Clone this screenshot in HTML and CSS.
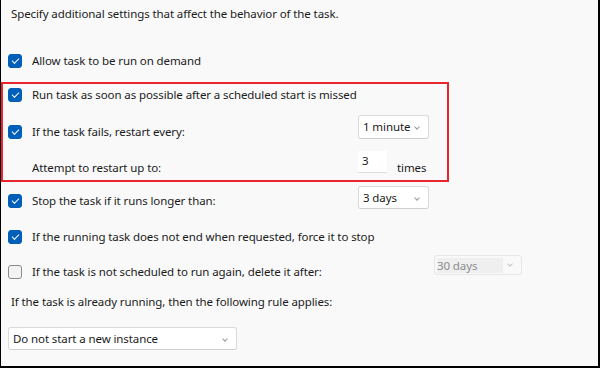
FILE: index.html
```html
<!DOCTYPE html>
<html lang="en">

<head>
    <meta charset="UTF-8">
    <meta name="viewport" content="width=device-width, initial-scale=1.0">
    <title>Task Settings</title>
    <link rel="stylesheet" href="styles.css">
</head>

<body>

    <div class="settings-panel">
        <p class="intro">Specify additional settings that affect the behavior of the task.</p>

        <!-- Allow on demand -->
        <div class="row row-allow">
            <label class="option"><span class="checkbox checked"></span>Allow task to be run on demand</label>
        </div>

        <!-- Highlighted restart settings -->
        <div class="highlight">
            <div class="row row-run">
                <label class="option"><span class="checkbox checked"></span>Run task as soon as possible after a scheduled start is missed</label>
            </div>
            <div class="row row-fails">
                <label class="option"><span class="checkbox checked"></span>If the task fails, restart every:</label>
                <div class="dropdown">1 minute<span class="chevron"></span></div>
            </div>
            <div class="row row-attempt">
                <label class="option option-plain">Attempt to restart up to:</label>
                <div class="count-group">
                    <span class="count-input">3</span>
                    <span class="count-unit">times</span>
                </div>
            </div>
        </div>

        <!-- Stop after -->
        <div class="row row-stop">
            <label class="option"><span class="checkbox checked"></span>Stop the task if it runs longer than:</label>
            <div class="dropdown">3 days<span class="chevron"></span></div>
        </div>

        <!-- Force stop -->
        <div class="row row-force">
            <label class="option"><span class="checkbox checked"></span>If the running task does not end when requested, force it to stop</label>
        </div>

        <!-- Delete after -->
        <div class="row row-delete">
            <label class="option"><span class="checkbox"></span>If the task is not scheduled to run again, delete it after:</label>
            <div class="dropdown dropdown-disabled"><span class="disabled-value">30 days</span><span class="chevron"></span></div>
        </div>

        <p class="rule-text">If the task is already running, then the following rule applies:</p>

        <div class="dropdown dropdown-wide">Do not start a new instance<span class="chevron"></span></div>
    </div>

</body>

</html>
```

FILE: styles.css
```css
* {
  box-sizing: border-box;
}
body {
  margin: 0;
  font-family: "Noto Sans", "Open Sans", sans-serif;
  font-size: 11.5px;
  letter-spacing: -0.1px;
  color: #1b1b1b;
  background-color: #f9f9f9;
}
.settings-panel {
  width: 600px;
  height: 368px;
  background-color: #f9f9f9;
  border-left: 1px solid #000;
  border-right: 2px solid #000;
  border-bottom: 2px solid #000;
  overflow: hidden;
}
.intro {
  margin: 0;
  height: 44px;
  padding: 6px 0 0 10px;
  line-height: 16px;
}
.row {
  display: grid;
  grid-template-columns: 350px auto;
  align-items: center;
  padding-left: 7px;
  height: 34px;
}
.row-allow { height: 34px; }
.row-run { height: 22px; }
.row-fails { height: 52px; }
.row-attempt { height: 20px; }
.row-stop { height: 38px; }
.row-force { height: 34px; }
.row-delete {
  height: 36px;
  grid-template-columns: 426px auto;
}
.highlight {
  margin-top: 4px;
  width: 448px;
  border: 2px solid #e8242c;
  padding-bottom: 2px;
}
.highlight .row {
  padding-left: 5px;
}
.option {
  display: flex;
  align-items: center;
  gap: 10px;
  white-space: nowrap;
  line-height: 16px;
}
.option-plain {
  padding-left: 24px;
}
.checkbox {
  width: 14px;
  height: 14px;
  border-radius: 3px;
  border: 1px solid #8a8a8a;
  background-color: #f3f3f3;
  position: relative;
  flex-shrink: 0;
}
.checkbox.checked {
  background-color: #005fb8;
  border-color: #005fb8;
}
/* the tick mark */
.checkbox.checked::after {
  content: "";
  position: absolute;
  left: 3px;
  top: 3px;
  width: 6px;
  height: 3px;
  border-left: 1px solid #fff;
  border-bottom: 1px solid #fff;
  transform: rotate(-45deg);
}
.dropdown {
  position: relative;
  width: 71px;
  height: 24px;
  margin-bottom: 10px;
  padding: 3px 0 0 4px;
  line-height: 16px;
  background-color: #fff;
  border: 1px solid #dadada;
  border-bottom-color: #cfcfcf;
  border-radius: 3px;
  white-space: nowrap;
}
.row-stop .dropdown {
  height: 23px;
  margin-bottom: 8px;
}
.chevron {
  position: absolute;
  right: 9px;
  top: 9px;
  width: 4px;
  height: 4px;
  border-right: 1px solid #9a9a9a;
  border-bottom: 1px solid #9a9a9a;
  transform: rotate(45deg);
}
.dropdown-disabled {
  width: 88px;
  height: 20px;
  margin-bottom: 14px;
  padding: 2px 0 0 2px;
  border-color: #e6e6e6;
  background-color: #f9f9f9;
  color: #8c8c8c;
}
.dropdown-disabled .chevron {
  top: 6px;
  border-color: #c4c4c4;
}
.disabled-value {
  display: block;
  width: 66px;
  height: 15px;
  line-height: 15px;
  background-color: #efefef;
}
.count-group {
  display: flex;
  align-items: center;
  gap: 10px;
}
/* box sits higher than the "times" label */
.count-input {
  width: 29px;
  height: 22px;
  margin: -8px 0 4px 0;
  padding: 2px 0 0 4px;
  line-height: 16px;
  background-color: #fff;
  border-bottom: 1px solid #dcdcdc;
}
.count-unit {
  line-height: 16px;
}
.rule-text {
  margin: 0;
  height: 22px;
  padding: 2px 0 0 10px;
  line-height: 20px;
  white-space: nowrap;
}
.dropdown-wide {
  width: 229px;
  height: 23px;
  margin: 15px 0 0 7px;
  padding-left: 4px;
}
```
